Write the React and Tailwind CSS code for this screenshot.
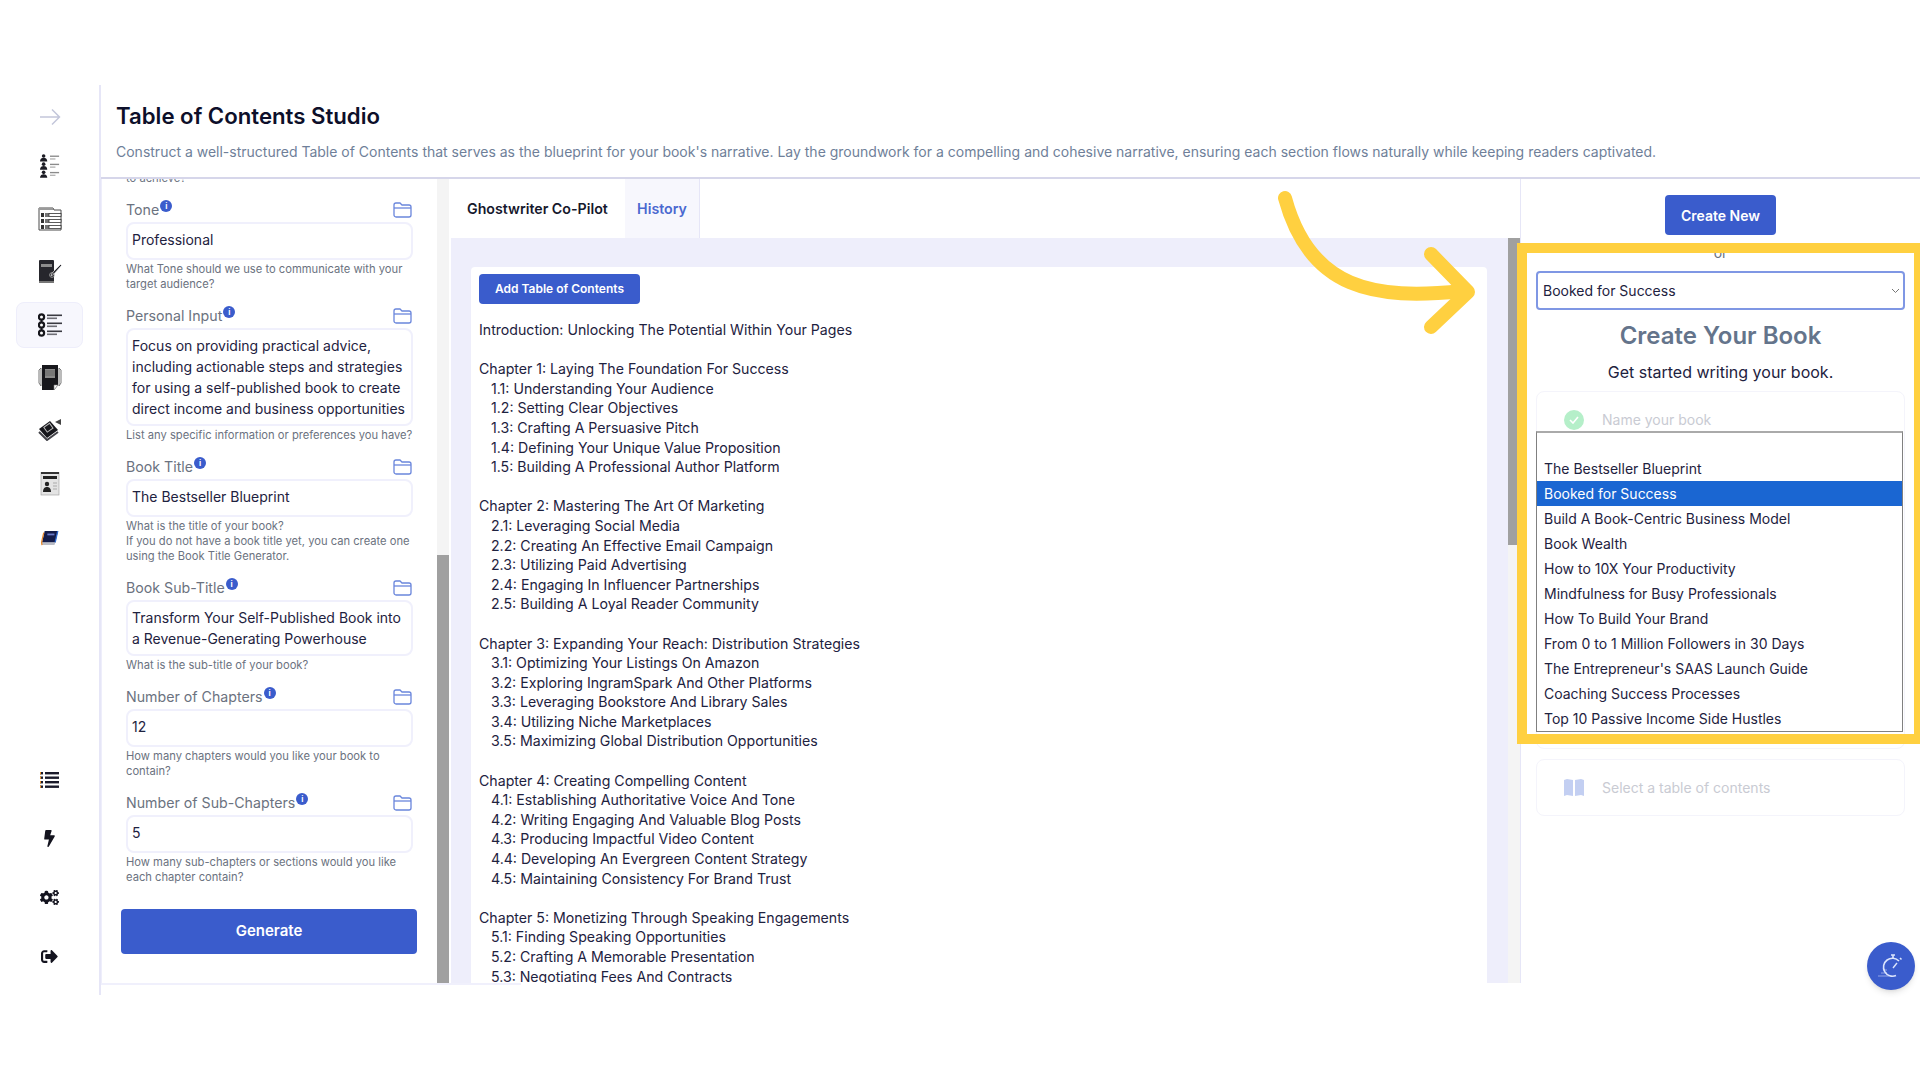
import { FaBolt, FaCogs, FaSignOutAlt } from "react-icons/fa";

const TOC = [
  "Introduction: Unlocking The Potential Within Your Pages",
  "",
  "Chapter 1: Laying The Foundation For Success",
  "  1.1: Understanding Your Audience",
  "  1.2: Setting Clear Objectives",
  "  1.3: Crafting A Persuasive Pitch",
  "  1.4: Defining Your Unique Value Proposition",
  "  1.5: Building A Professional Author Platform",
  "",
  "Chapter 2: Mastering The Art Of Marketing",
  "  2.1: Leveraging Social Media",
  "  2.2: Creating An Effective Email Campaign",
  "  2.3: Utilizing Paid Advertising",
  "  2.4: Engaging In Influencer Partnerships",
  "  2.5: Building A Loyal Reader Community",
  "",
  "Chapter 3: Expanding Your Reach: Distribution Strategies",
  "  3.1: Optimizing Your Listings On Amazon",
  "  3.2: Exploring IngramSpark And Other Platforms",
  "  3.3: Leveraging Bookstore And Library Sales",
  "  3.4: Utilizing Niche Marketplaces",
  "  3.5: Maximizing Global Distribution Opportunities",
  "",
  "Chapter 4: Creating Compelling Content",
  "  4.1: Establishing Authoritative Voice And Tone",
  "  4.2: Writing Engaging And Valuable Blog Posts",
  "  4.3: Producing Impactful Video Content",
  "  4.4: Developing An Evergreen Content Strategy",
  "  4.5: Maintaining Consistency For Brand Trust",
  "",
  "Chapter 5: Monetizing Through Speaking Engagements",
  "  5.1: Finding Speaking Opportunities",
  "  5.2: Crafting A Memorable Presentation",
  "  5.3: Negotiating Fees And Contracts",
];

const BOOKS = [
  "The Bestseller Blueprint",
  "Booked for Success",
  "Build A Book-Centric Business Model",
  "Book Wealth",
  "How to 10X Your Productivity",
  "Mindfulness for Busy Professionals",
  "How To Build Your Brand",
  "From 0 to 1 Million Followers in 30 Days",
  "The Entrepreneur's SAAS Launch Guide",
  "Coaching Success Processes",
  "Top 10 Passive Income Side Hustles",
];

// ── Sidebar drawings ────────────────────────────────────────────────────
function PeopleIcon() {
  return (
    <svg width="20" height="24" viewBox="0 0 22 26">
      {[0, 9, 18].map((y) => (
        <g key={y}>
          <circle cx="4" cy={y + 2} r="2" fill="#1c1c24" />
          <path d={`M0 ${y + 8}c0-3 2-4 4-4s4 1 4 4z`} fill="#1c1c24" />
          <rect x="11" y={y + 1.5} width="10" height="1.5" fill="#8b8b8b" />
          <rect x="11" y={y + 4.5} width="6" height="1.5" fill="#b5b5b5" />
        </g>
      ))}
    </svg>
  );
}

function TableFormIcon() {
  return (
    <svg width="24" height="24" viewBox="0 0 24 24">
      <path d="M1 1h14l1 2h7v20H1z" fill="#fff" stroke="#4a4a4a" strokeWidth="1" />
      <rect x="1" y="1" width="14" height="2" fill="#9a9a9a" />
      {[6, 12, 18].map((y) => (
        <g key={y}>
          <rect x="3" y={y} width="3" height="4" fill="#333" />
          <rect x="7" y={y} width="4" height="4" fill="#777" />
          <rect x="11" y={y + 0.5} width="12" height="3" fill="#fff" stroke="#333" strokeWidth="0.8" />
        </g>
      ))}
    </svg>
  );
}

function BookPenIcon() {
  return (
    <svg width="24" height="24" viewBox="0 0 24 24">
      <rect x="1" y="0" width="15" height="23" rx="1" fill="#26262c" />
      <rect x="3" y="4" width="11" height="3" fill="#8d8d8d" />
      <rect x="1" y="21" width="15" height="2" fill="#777" />
      <path d="M22.5 4.5l1 1-8 9-2.5 1.5 1-3z" fill="#26262c" stroke="#fff" strokeWidth="0.6" />
      <circle cx="14" cy="15" r="2.4" fill="none" stroke="#aaa" strokeWidth="0.8" />
    </svg>
  );
}

function NodesIcon() {
  return (
    <svg width="24" height="24" viewBox="0 0 24 24">
      <path d="M3.5 4v17" stroke="#16161c" strokeWidth="2" />
      {[4, 12, 20].map((y) => (
        <g key={y}>
          <circle cx="3.5" cy={y} r="2.6" fill="#fff" stroke="#16161c" strokeWidth="2.2" />
          <rect x="9" y={y - 2.5} width="15" height="1.6" fill="#3b3b42" />
          <rect x="9" y={y + 0.5} width="10" height="1.6" fill="#6f6f76" />
        </g>
      ))}
    </svg>
  );
}

function DarkBookIcon() {
  return (
    <svg width="24" height="26" viewBox="0 0 24 26">
      <path d="M3 3L1 5v13l2 3zM21 3l2 2v13l-2 3z" fill="none" stroke="#777" strokeWidth="1" />
      <path d="M4 0h16v20l-4 5H4z" fill="#17171c" />
      <rect x="7" y="4" width="10" height="9" fill="#8a8a8a" />
      <path d="M7 6h10M7 8h10M7 10h10" stroke="#555" strokeWidth="0.7" />
      <path d="M16 25l4-5h-4z" fill="#fff" stroke="#777" strokeWidth="0.6" />
    </svg>
  );
}

function BookSpeakerIcon() {
  return (
    <svg className="-mt-[3px]" width="24" height="24" viewBox="0 0 24 24">
      <path d="M1 12L12 4l8 9-11 8z" fill="#17171c" />
      <path d="M1 15l8 8 11-8" fill="none" stroke="#44444a" strokeWidth="2" />
      <rect x="7" y="8" width="7" height="6" transform="rotate(-35 10 11)" fill="none" stroke="#bbb" strokeWidth="1" />
      <path d="M17 5l6-3v6z" fill="#444" />
    </svg>
  );
}

function NewsIcon() {
  return (
    <svg width="20" height="24" viewBox="0 0 20 24">
      <rect x="1" y="0" width="18" height="23" fill="#e4e4e4" stroke="#9a9a9a" strokeWidth="0.6" />
      <rect x="1" y="0" width="18" height="2" fill="#333" />
      <rect x="3" y="4" width="14" height="3" fill="#222" />
      <circle cx="7" cy="12" r="2.2" fill="#222" />
      <path d="M3 20c0-4 2-5 4-5s4 1 4 5z" fill="#222" />
      <path d="M13 11h4M13 14h4M13 17h4" stroke="#aaa" strokeWidth="1" />
    </svg>
  );
}

function ColorBookIcon() {
  return (
    <svg className="mt-[3px]" width="18" height="16" viewBox="0 0 20 18">
      <path d="M4 1h15l-3 13H1z" fill="#141c4a" />
      <path d="M18 1h1.5l-3 13H15z" fill="#2f6bd0" />
      <path d="M1 14h15l-1 3H1z" fill="#b9bcc6" />
      <path d="M3 3L0.5 14 1 17" stroke="#e8882a" strokeWidth="1.4" fill="none" />
      <rect x="7" y="4" width="8" height="2" fill="#6a7ac8" />
    </svg>
  );
}

function StripedListIcon() {
  return (
    <svg width="19" height="16" viewBox="0 0 19 16">
      {[1, 5.5, 10, 14.5].map((y) => (
        <g key={y}>
          <rect x="0" y={y - 1} width="3" height="2.4" fill="#1a1a2a" />
          <rect x="0" y={y - 1} width="1" height="2.4" fill="#e8902a" />
          <rect x="5" y={y - 1} width="14" height="2.4" fill="#1a1a2a" />
        </g>
      ))}
    </svg>
  );
}

function SideItem({ children, active }) {
  return (
    <div className="h-[53px] flex items-center justify-center">
      {active ? (
        <div className="w-[67px] h-[46px] rounded-lg bg-[#f7f7fd] border border-[#eeeefb] flex items-center justify-center">
          {children}
        </div>
      ) : (
        children
      )}
    </div>
  );
}

function Sidebar() {
  return (
    <div className="w-[101px] shrink-0 border-r-2 border-[#e6e6f7] pt-[9px] flex flex-col">
      <div className="h-[45px] flex items-center justify-center">
        <svg width="22" height="18" viewBox="0 0 22 18" fill="none" stroke="#c3c6da" strokeWidth="1.5">
          <path d="M1 9h19M13 1.5L20.5 9 13 16.5" />
        </svg>
      </div>
      <SideItem><PeopleIcon /></SideItem>
      <SideItem><TableFormIcon /></SideItem>
      <SideItem><BookPenIcon /></SideItem>
      <SideItem active><NodesIcon /></SideItem>
      <SideItem><DarkBookIcon /></SideItem>
      <SideItem><BookSpeakerIcon /></SideItem>
      <SideItem><NewsIcon /></SideItem>
      <SideItem><ColorBookIcon /></SideItem>
      <div className="mt-[190px] flex flex-col gap-[6px]">
        <SideItem><StripedListIcon /></SideItem>
        <SideItem><FaBolt className="text-[#14141f] text-[17px]" /></SideItem>
        <SideItem><FaCogs className="text-[#14141f] text-[19px]" /></SideItem>
        <SideItem><FaSignOutAlt className="text-[#14141f] text-[17px]" /></SideItem>
      </div>
    </div>
  );
}

// ── Left form ───────────────────────────────────────────────────────────
function FolderIcon() {
  return (
    <svg width="19" height="16" viewBox="0 0 19 16" fill="none" stroke="#6a86dc" strokeWidth="1.3">
      <path d="M1 3a2 2 0 0 1 2-2h4l2 2h7a2 2 0 0 1 2 2v8a2 2 0 0 1-2 2H3a2 2 0 0 1-2-2z" />
      <path d="M1 6h17" />
    </svg>
  );
}

function Field({ label, value, help, multi }) {
  return (
    <div className="mb-[13px] w-[287px]">
      <div className="h-[22px] flex items-center justify-between pr-[1px]">
        <div className="flex items-start">
          <span className="text-[14.2px] leading-[22px] text-[#6b7280]">{label}</span>
          <span className="ml-[1px] mt-[1px] w-[12px] h-[12px] rounded-full bg-[#3a5ccc] text-white text-[8px] leading-[12px] font-bold text-center">
            i
          </span>
        </div>
        <FolderIcon />
      </div>
      <div
        className={`mt-[1px] rounded-lg border-2 border-[#f0f0fc] px-[4px] text-[14px] leading-[21px] text-[#1e2240] ${
          multi ? "py-[5px]" : "h-[38px] flex items-center pb-[3px]"
        }`}
      >
        {value}
      </div>
      <div className="mt-[2px] text-[11.2px] leading-[15px] text-[#6b7280] whitespace-pre">{help}</div>
    </div>
  );
}

function FormPanel() {
  return (
    <div className="w-[336px] shrink-0 border-l border-[#eeeefb] pl-[24px] flex flex-col overflow-hidden">
      <div className="-mt-[8px] mb-[13px] text-[11.2px] leading-[15px] text-[#6b7280]">to achieve?</div>
      <Field
        label="Tone"
        value="Professional"
        help={"What Tone should we use to communicate with your\ntarget audience?"}
      />
      <Field
        label="Personal Input"
        multi
        value="Focus on providing practical advice, including actionable steps and strategies for using a self-published book to create direct income and business opportunities"
        help="List any specific information or preferences you have?"
      />
      <Field
        label="Book Title"
        value="The Bestseller Blueprint"
        help={"What is the title of your book?\nIf you do not have a book title yet, you can create one\nusing the Book Title Generator."}
      />
      <Field
        label="Book Sub-Title"
        multi
        value="Transform Your Self-Published Book into a Revenue-Generating Powerhouse"
        help="What is the sub-title of your book?"
      />
      <Field
        label="Number of Chapters"
        value="12"
        help={"How many chapters would you like your book to\ncontain?"}
      />
      <Field
        label="Number of Sub-Chapters"
        value="5"
        help={"How many sub-chapters or sections would you like\neach chapter contain?"}
      />
      <button className="-ml-[5px] mt-[11px] w-[296px] h-[45px] shrink-0 rounded bg-[#3a5ccc] text-white text-[15px] font-semibold">
        Generate
      </button>
    </div>
  );
}

function Scrollbar({ thumbTop, thumbHeight }) {
  return (
    <div className="w-[12px] shrink-0 h-full bg-[#f4f4f4] flex flex-col">
      <div style={{ height: thumbTop }} />
      <div className="bg-[#a0a0a0]" style={{ height: thumbHeight }} />
    </div>
  );
}

// ── Middle panel ────────────────────────────────────────────────────────
function TocPanel() {
  return (
    <div className="w-[1069px] ml-[2px] shrink-0 flex flex-col h-full">
      <div className="h-[59px] shrink-0 flex text-[14.2px] font-semibold">
        <div className="w-[174px] flex items-center pl-[16px] text-[#16182c]">Ghostwriter Co-Pilot</div>
        <div className="w-[75px] flex items-center justify-center bg-[#f7f7fd] border-r border-[#e6e6f7] text-[#4a68d0]">
          History
        </div>
      </div>
      <div className="flex-1 min-h-0 flex bg-[#eeeefb]">
        <div className="flex-1 min-w-0 pt-[29px] pl-[20px] overflow-hidden">
          <div className="w-[1016px] rounded-t bg-white pl-[8px] pt-[7px] h-[800px]">
            <button className="w-[161px] h-[30px] rounded bg-[#3a5ccc] text-white text-[12px] font-semibold">
              Add Table of Contents
            </button>
            <div className="mt-[16px] text-[14.15px] leading-[19.6px] text-[#1e2240]">
              {TOC.map((line, i) => (
                <div key={i} className={`h-[19.6px] ${line.startsWith("  ") ? "pl-[12px]" : ""}`}>
                  {line.trim()}
                </div>
              ))}
            </div>
          </div>
        </div>
        <Scrollbar thumbTop={0} thumbHeight={307} />
      </div>
    </div>
  );
}

// ── Right panel ─────────────────────────────────────────────────────────
function StopwatchIcon() {
  return (
    <svg width="30" height="30" viewBox="0 0 30 30" fill="none" stroke="#dbe4fc" strokeWidth="1.6">
      <path d="M23 10a9 9 0 1 0-3 14.5" />
      <path d="M17 4v3M15 4h4M24 7l1.5 1.5" />
      <path d="M17 17l4-5" strokeWidth="1.4" />
      <path d="M2 25h11M5 22h6M7 19h4" strokeWidth="1" opacity="0.55" />
    </svg>
  );
}

function RightPanel() {
  return (
    <div className="flex-1 min-w-0 border-l border-[#e6e6f7] h-full px-[15px] flex flex-col">
      <button className="mt-[16px] self-center w-[111px] h-[40px] shrink-0 rounded bg-[#3a5ccc] text-white text-[14px] font-semibold">
        Create New
      </button>
      <div className="mt-[10px] text-center text-[14px] leading-[15px] text-[#6b7280]">or</div>
      <div className="mt-[11px] h-[39px] shrink-0 rounded border-2 border-[#7f97e4] flex items-center justify-between pl-[5px] pr-[3px] text-[14px] text-[#1e2240]">
        <span>Booked for Success</span>
        <svg width="9" height="6" viewBox="0 0 9 6" fill="none" stroke="#777" strokeWidth="1">
          <path d="M1 1l3.5 3.5L8 1" />
        </svg>
      </div>
      <div className="mt-[10px] text-center text-[24px] leading-[32px] font-semibold text-[#64748b]">Create Your Book</div>
      <div className="mt-[8px] text-center text-[16px] leading-[24px] text-[#1e2240]">Get started writing your book.</div>
      <div className="relative mt-[7px] h-[358px] shrink-0 rounded-lg border border-[#f4f4fb]">
        <div className="h-[56px] flex items-center pl-[27px] pb-[1px] text-[14px] text-[#c9cbd3]">
          <div className="w-[20px] h-[20px] rounded-full bg-[#b5efc9] flex items-center justify-center">
            <svg width="10" height="8" viewBox="0 0 10 8" fill="none" stroke="#fff" strokeWidth="1.6">
              <path d="M1 4l3 3 5-6" />
            </svg>
          </div>
          <span className="ml-[18px]">Name your book</span>
        </div>
        <div className="absolute left-[-1px] top-[39px] w-[367px] h-[301px] pt-[23px] bg-white border border-[#808080] border-t-2 border-t-[#aaaaaa]">
          {BOOKS.map((b) => (
            <div
              key={b}
              className={`h-[25px] pl-[7px] text-[14px] leading-[25px] ${
                b === "Booked for Success" ? "bg-[#1a66d2] text-white" : "text-[#1e2240]"
              }`}
            >
              {b}
            </div>
          ))}
        </div>
      </div>
      <div className="mt-[10px] h-[57px] shrink-0 rounded-lg border border-[#f4f4fb] flex items-center pl-[27px] text-[14px] text-[#c9cbd3]">
        <svg width="20" height="18" viewBox="0 0 20 18" fill="#c3cff2">
          <path d="M0 1l3-1 6 1v16l-6-1-3 1zM11 1l6-1 3 1v16l-3-1-6 1z" />
        </svg>
        <span className="ml-[18px]">Select a table of contents</span>
      </div>
    </div>
  );
}

export default function App() {
  return (
    <div className="relative w-[1920px] h-[1080px] overflow-hidden bg-white pt-[85px] [font-family:Inter,sans-serif]">
      <div className="flex h-[910px]">
        <Sidebar />
        <div className="flex-1 min-w-0 flex flex-col">
          <div className="h-[94px] shrink-0 border-b-2 border-[#d6d6ea] pl-[15px] pt-[17px]">
            <h1 className="text-[22.2px] leading-[28px] font-semibold text-[#0d0f2a]">Table of Contents Studio</h1>
            <p className="mt-[12px] text-[14px] leading-[20px] text-[#6f7f99]">
              Construct a well-structured Table of Contents that serves as the blueprint for your book's narrative. Lay the groundwork for a compelling and cohesive narrative, ensuring each section flows naturally while keeping readers captivated.
            </p>
          </div>
          <div className="h-[804px] shrink-0 flex overflow-hidden">
            <FormPanel />
            <Scrollbar thumbTop={376} thumbHeight={428} />
            <TocPanel />
            <RightPanel />
          </div>
          <div className="h-[2px] w-[420px] bg-[#f0f0fc]" />
        </div>
      </div>

      {/* Floating help button */}
      <div className="absolute left-[1867px] top-[942px] w-[48px] h-[48px] rounded-full bg-[#3a5ccc] shadow-md flex items-center justify-center">
        <StopwatchIcon />
      </div>

      {/* Annotation overlay */}
      <div className="absolute left-[1517px] top-[243px] w-[403px] h-[501px] border-[10px] border-r-[6px] border-[#ffd040] pointer-events-none" />
      <svg className="absolute left-0 top-0 pointer-events-none" width="1920" height="1080" fill="none" stroke="#ffd040" strokeWidth="14" strokeLinecap="round" strokeLinejoin="round">
        <path d="M1285 198C1310 290 1375 300 1462 291" />
        <path d="M1431 254L1468 292L1431 327" />
      </svg>
    </div>
  );
}
